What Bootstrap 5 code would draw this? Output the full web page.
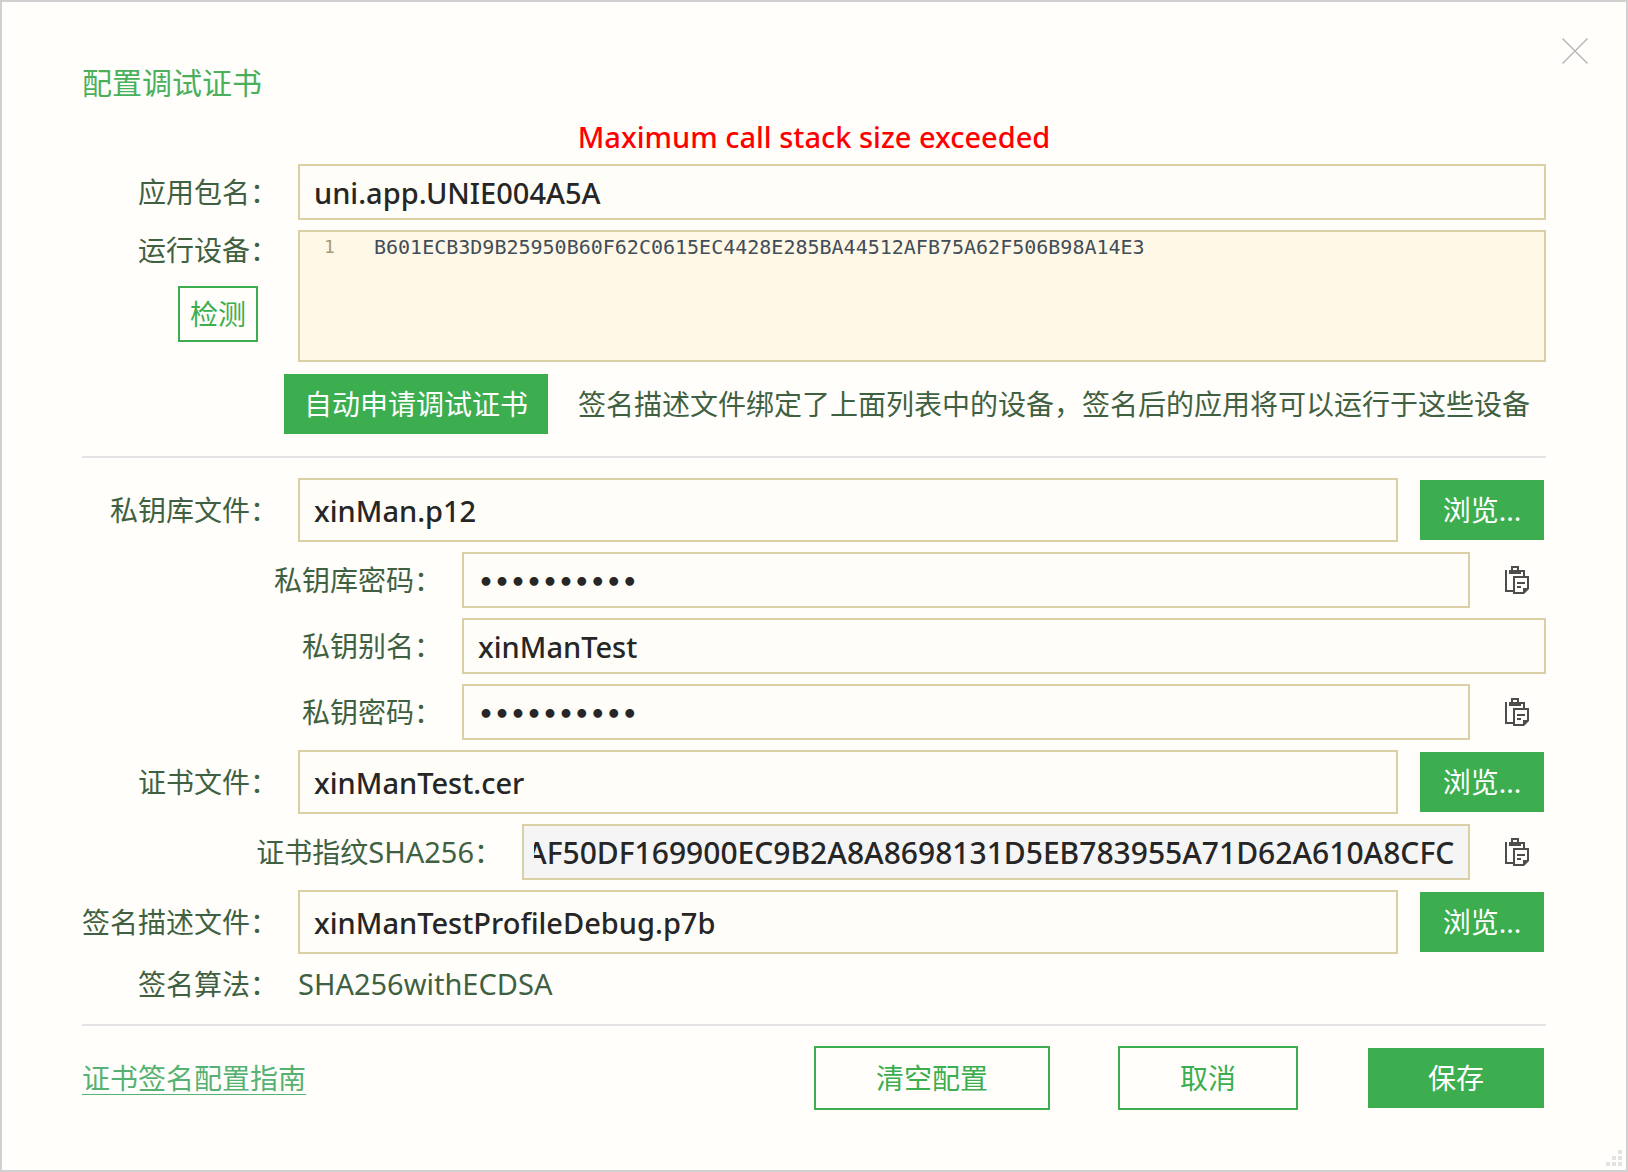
<!DOCTYPE html>
<html lang="zh-CN">
<head>
<meta charset="utf-8">
<meta name="viewport" content="width=device-width, initial-scale=1">
<title>配置调试证书</title>
<link href="https://cdn.jsdelivr.net/npm/bootstrap@5.3.0/dist/css/bootstrap.min.css" rel="stylesheet">
<style>
  :root { --green: #3cae4f; --ink: #3f6142; --line: #dbcfa5; --page: #fffefb; }
  body { background: var(--page); color: var(--ink); font-family: "Noto Sans", "Noto Sans CJK SC", sans-serif; font-size: 28px; line-height: 40px; }
  .dialog-frame { min-height: 100vh; border: 2px solid #d1d0d1; padding: 59px 80px; }
  .dialog-title { color: #4bb05c; font-size: 30px; line-height: 44px; }
  .error-line { color: #f00; font-weight: 500; margin: 12px 0 7px; }
  .latin { font-size: 29px; }
  .stack { gap: 10px; }
  .line { display: flex; align-items: center; gap: 20px; }
  .cap { flex: 0 0 196px; text-align: right; white-space: nowrap; }
  .cap-sub { flex-basis: 360px; }
  .cap-sha { flex-basis: 420px; }
  .box.form-control { flex: 1 1 0; min-width: 0; height: 56px; padding: 0 14px; border: 2px solid var(--line); border-radius: 0; background: #fffdf7; color: #262626; font-size: 29px; font-weight: 500; line-height: 40px; }
  .box.box-tall { height: 64px; }
  .box.box-locked { background: #f5f5f6; padding-left: 10px; font-size: 30px; }
  .box[type=password] { padding-top: 4px; font-family: "DejaVu Sans", sans-serif; font-size: 25px; font-weight: 700; }
  .editor { flex: 1 1 0; height: 132px; border: 2px solid var(--line); background: #fff8e7; padding: 2px 0; font-family: "DejaVu Sans Mono", monospace; line-height: 26px; }
  .gutter { flex: 0 0 74px; padding-left: 24px; color: #a49a74; font-size: 18px; }
  .code { border: 0; padding: 0; background: transparent; color: #414d59; font-size: 20px; line-height: 26px; resize: none; outline: 0; }
  .act.btn { height: 64px; padding: 0 20px; border: 2px solid transparent; border-radius: 0; background: var(--green) padding-box; color: #fff; font-size: 28px; line-height: 40px; white-space: nowrap; }
  .act.act-line { background: transparent; border-color: var(--green); color: var(--green); }
  .act.act-small { height: 56px; padding: 0 10px; margin: 16px 20px 0 0; }
  .auto-line { margin-left: 200px; gap: 28px; }
  .rule { height: 2px; margin: 20px 0; border: 0; background: #e4e3e5; opacity: 1; }
  .paste { flex: 0 0 56px; border: 0; padding: 0 2px 0 0; background: none; color: #4d4d4d; }
  .guide { color: #56b273; line-height: 32px; text-decoration: none; border-bottom: 1px solid #56b273; }
  .dismiss { top: 35px; right: 37px; border: 0; padding: 0; background: none; color: #b8b8b8; }
  .grip { right: 4px; bottom: 4px; color: #e3e2e3; }
  .foot-actions { gap: 68px; }
  .w-clear { width: 236px; } .w-cancel { width: 180px; } .w-browse { flex: 0 0 128px; }
</style>
</head>
<body>
<svg class="d-none" aria-hidden="true">
  <symbol id="paste" viewBox="0 0 24 28">
    <path fill="currentColor" fill-rule="evenodd" d="M6 0H14V4H20V10H18V6H16V8H4V4H6ZM8 2V4H12V2ZM0 4H2V24H8V26H0ZM8 10H24V23L19 28H8ZM10 12V26H18V22H22V12ZM12 16H20V18H12ZM12 20H16V22H12Z"/>
  </symbol>
</svg>
<main class="dialog-frame position-relative">
  <button type="button" class="dismiss position-absolute d-flex" aria-label="关闭">
    <svg width="28" height="28" viewBox="0 0 28 28" fill="none" stroke="currentColor" stroke-width="1.5"><path d="M1.500 1.500L26.500 26.500M26.500 1.500L1.500 26.500"/></svg>
  </button>
  <form>
    <h1 class="dialog-title fw-normal m-0">配置调试证书</h1>
    <div class="error-line latin text-center" role="alert">Maximum call stack size exceeded</div>

    <div class="stack d-flex flex-column">
      <div class="line">
        <label class="cap" for="pkg">应用包名：</label>
        <input class="form-control box" id="pkg" type="text" value="uni.app.UNIE004A5A">
      </div>
      <div class="line align-items-start">
        <div class="cap">
          <label class="d-block" for="devices">运行设备：</label>
          <button type="button" class="btn act act-line act-small">检测</button>
        </div>
        <div class="editor d-flex">
          <span class="gutter">1</span>
          <textarea class="code flex-grow-1" id="devices" spellcheck="false">B601ECB3D9B25950B60F62C0615EC4428E285BA44512AFB75A62F506B98A14E3</textarea>
        </div>
      </div>
      <div class="line auto-line">
        <button type="button" class="btn act">自动申请调试证书</button>
        <span class="text-nowrap">签名描述文件绑定了上面列表中的设备，签名后的应用将可以运行于这些设备</span>
      </div>
    </div>

    <hr class="rule">

    <div class="stack d-flex flex-column">
      <div class="line">
        <label class="cap" for="store">私钥库文件：</label>
        <input class="form-control box box-tall" id="store" type="text" value="xinMan.p12">
        <button type="button" class="btn act w-browse">浏览...</button>
      </div>
      <div class="line">
        <label class="cap cap-sub" for="storepw">私钥库密码：</label>
        <input class="form-control box" id="storepw" type="password" value="0123456789">
        <button type="button" class="paste" aria-label="粘贴"><svg class="d-block mx-auto" width="24" height="28"><use href="#paste"/></svg></button>
      </div>
      <div class="line">
        <label class="cap cap-sub" for="alias">私钥别名：</label>
        <input class="form-control box" id="alias" type="text" value="xinManTest">
      </div>
      <div class="line">
        <label class="cap cap-sub" for="keypw">私钥密码：</label>
        <input class="form-control box" id="keypw" type="password" value="0123456789">
        <button type="button" class="paste" aria-label="粘贴"><svg class="d-block mx-auto" width="24" height="28"><use href="#paste"/></svg></button>
      </div>
      <div class="line">
        <label class="cap" for="cert">证书文件：</label>
        <input class="form-control box box-tall" id="cert" type="text" value="xinManTest.cer">
        <button type="button" class="btn act w-browse">浏览...</button>
      </div>
      <div class="line">
        <label class="cap cap-sha" for="sha">证书指纹<span class="latin">SHA256</span>：</label>
        <input class="form-control box box-locked text-end" id="sha" type="text" readonly value="AF50DF169900EC9B2A8A8698131D5EB783955A71D62A610A8CFC">
        <button type="button" class="paste" aria-label="复制"><svg class="d-block mx-auto" width="24" height="28"><use href="#paste"/></svg></button>
      </div>
      <div class="line">
        <label class="cap" for="profile">签名描述文件：</label>
        <input class="form-control box box-tall" id="profile" type="text" value="xinManTestProfileDebug.p7b">
        <button type="button" class="btn act w-browse">浏览...</button>
      </div>
      <div class="line">
        <span class="cap">签名算法：</span>
        <span class="latin">SHA256withECDSA</span>
      </div>
    </div>

    <hr class="rule">

    <div class="d-flex align-items-center">
      <a class="guide me-auto" href="#guide">证书签名配置指南</a>
      <div class="foot-actions d-flex">
        <button type="button" class="btn act act-line w-clear">清空配置</button>
        <button type="button" class="btn act act-line w-cancel">取消</button>
        <button type="submit" class="btn act w-cancel">保存</button>
      </div>
    </div>
  </form>
  <svg class="grip position-absolute" width="16" height="16" viewBox="0 0 16 16" fill="currentColor" aria-hidden="true"><path d="M12 0h4v4h-4zM6 6h4v4H6zM12 6h4v4h-4zM0 12h4v4H0zM6 12h4v4H6zM12 12h4v4h-4z"/></svg>
</main>
<script src="https://cdn.jsdelivr.net/npm/bootstrap@5.3.0/dist/js/bootstrap.bundle.min.js"></script>
<script>
  // keep the tail of the long fingerprint in view
  const sha = document.getElementById('sha');
  sha.scrollLeft = sha.scrollWidth;
</script>
</body>
</html>
